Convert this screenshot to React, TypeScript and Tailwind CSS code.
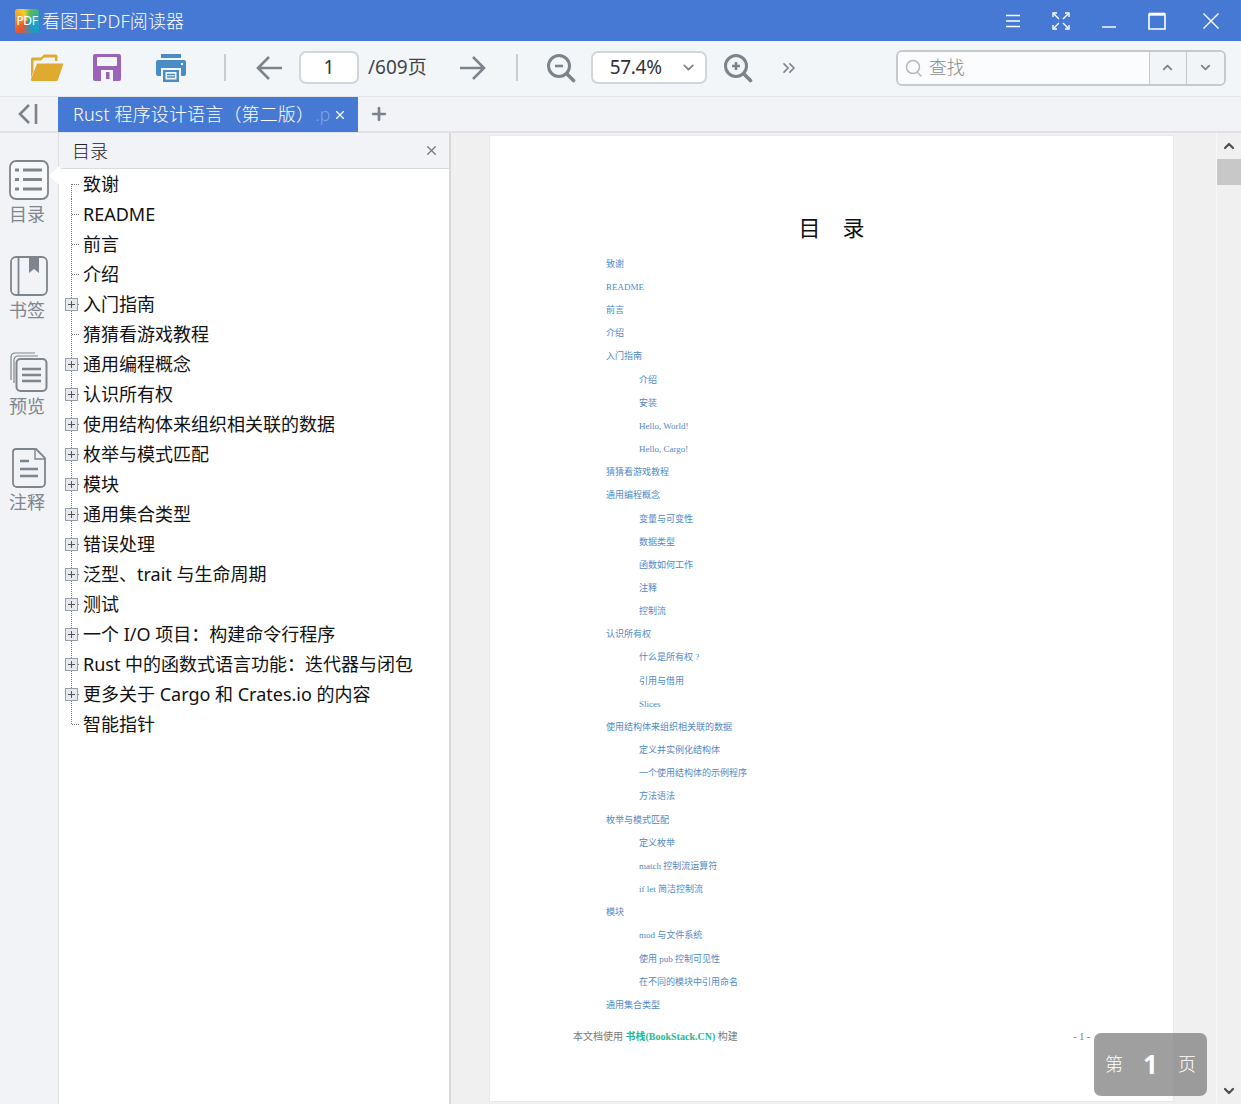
import { ChevronDown, ChevronUp, ChevronsRight, Plus, X } from "lucide-react"

const tocItems = [
  { label: "致谢" },
  { label: "README" },
  { label: "前言" },
  { label: "介绍" },
  { label: "入门指南", hasChildren: true },
  { label: "猜猜看游戏教程" },
  { label: "通用编程概念", hasChildren: true },
  { label: "认识所有权", hasChildren: true },
  { label: "使用结构体来组织相关联的数据", hasChildren: true },
  { label: "枚举与模式匹配", hasChildren: true },
  { label: "模块", hasChildren: true },
  { label: "通用集合类型", hasChildren: true },
  { label: "错误处理", hasChildren: true },
  { label: "泛型、trait 与生命周期", hasChildren: true },
  { label: "测试", hasChildren: true },
  { label: "一个 I/O 项目：构建命令行程序", hasChildren: true },
  { label: "Rust 中的函数式语言功能：迭代器与闭包", hasChildren: true },
  { label: "更多关于 Cargo 和 Crates.io 的内容", hasChildren: true },
  { label: "智能指针" },
]

const pageRows: [string, boolean][] = [
  ["致谢", false],
  ["README", false],
  ["前言", false],
  ["介绍", false],
  ["入门指南", false],
  ["介绍", true],
  ["安装", true],
  ["Hello, World!", true],
  ["Hello, Cargo!", true],
  ["猜猜看游戏教程", false],
  ["通用编程概念", false],
  ["变量与可变性", true],
  ["数据类型", true],
  ["函数如何工作", true],
  ["注释", true],
  ["控制流", true],
  ["认识所有权", false],
  ["什么是所有权 ?", true],
  ["引用与借用", true],
  ["Slices", true],
  ["使用结构体来组织相关联的数据", false],
  ["定义并实例化结构体", true],
  ["一个使用结构体的示例程序", true],
  ["方法语法", true],
  ["枚举与模式匹配", false],
  ["定义枚举", true],
  ["match 控制流运算符", true],
  ["if let 简洁控制流", true],
  ["模块", false],
  ["mod 与文件系统", true],
  ["使用 pub 控制可见性", true],
  ["在不同的模块中引用命名", true],
  ["通用集合类型", false],
]

function TreeGutter({ hasChildren, first, last }: { hasChildren?: boolean; first?: boolean; last?: boolean }) {
  return (
    <svg width="24" height="30" className="shrink-0">
      <line x1="12.5" y1={first ? 15 : 0} x2="12.5" y2={last ? 15 : 30} stroke="#777" strokeDasharray="1 1" />
      <line x1="13" y1="15.5" x2="21" y2="15.5" stroke="#777" strokeDasharray="1 1" />
      {hasChildren && (
        <>
          <rect x="6.5" y="9.5" width="12" height="12" fill="#e6e9f0" stroke="#9aa0a8" />
          <path d="M9 15.5h7M12.5 12v7" stroke="#555" />
        </>
      )}
    </svg>
  )
}

function RailItem({ label, children }: { label: string; children: React.ReactNode }) {
  return (
    <div className="flex flex-col items-center h-[96px]">
      <div className="h-[42px] flex items-center justify-center">{children}</div>
      <span className="mt-[1px] text-[18px] leading-[24px] text-[#7f868e] -ml-[4px]">{label}</span>
    </div>
  )
}

export default function App() {
  return (
    <div className="relative w-[1241px] h-[1104px] overflow-hidden flex flex-col bg-[#f0f0f0] [font-family:'Noto_Sans','Noto_Sans_CJK_SC',sans-serif]">
      {/* Title bar */}
      <div className="h-[41px] shrink-0 bg-[#4679d4] flex items-center text-white">
        <div className="ml-[15px] w-[24px] h-[24px] rounded-[3px] flex items-center justify-center overflow-hidden bg-[conic-gradient(from_20deg,#5cb85c,#18a8c8,#1f9ac0_130deg,#e8552c_200deg,#f08a24_260deg,#f7d02c_320deg,#5cb85c)]">
          <span className="text-[12px] leading-none tracking-[-0.4px] text-white">PDF</span>
        </div>
        <span className="ml-[3px] pt-[1px] text-[18px] font-light tracking-[0.2px]">看图王PDF阅读器</span>
        <div className="ml-auto flex items-center">
          <svg width="16" height="16" viewBox="0 0 16 16" className="mr-[31px]" stroke="#fff" strokeWidth="1.4">
            <path d="M1 2.5h14M1 8h14M1 13.5h14" />
          </svg>
          <svg width="18" height="18" viewBox="0 0 18 18" className="mr-[31px]" fill="none" stroke="#fff" strokeWidth="1.4">
            <path d="M2 2l5 5M16 2l-5 5M2 16l5-5M16 16l-5-5" />
            <path d="M1 5V1h4M13 1h4v4M1 13v4h4M13 17h4v-4" />
          </svg>
          <svg width="16" height="16" viewBox="0 0 16 16" className="mr-[31px]" stroke="#fff" strokeWidth="1.4">
            <path d="M1 14h14" />
          </svg>
          <svg width="18" height="18" viewBox="0 0 18 18" className="mr-[36px]" fill="none" stroke="#fff" strokeWidth="1.6">
            <path d="M1 2h16v15H1z" />
            <path d="M1 2.2h16" strokeWidth="3" />
          </svg>
          <svg width="18" height="18" viewBox="0 0 18 18" className="mr-[21px]" stroke="#fff" strokeWidth="1.4">
            <path d="M1.5 1.5l15 15M16.5 1.5l-15 15" />
          </svg>
        </div>
      </div>

      {/* Toolbar */}
      <div className="h-[56px] shrink-0 bg-[#f2f6f9] border-b border-[#e2e5e8] pb-[2px] flex items-center">
        <svg width="34" height="28" viewBox="0 0 34 28" className="ml-[30px]">
          <path d="M1 24V5.5A2 2 0 0 1 3 3.5h8l3-3h12a1.5 1.5 0 0 1 1.5 1.5v5H25V3.5H14L11 6.5H3.5V17z" fill="#e0a92f" />
          <path d="M7 9.5h26.5L28 25.5a2 2 0 0 1-2 1.5H2.5A1.5 1.5 0 0 1 1 25z" fill="#e0a92f" />
        </svg>
        <svg width="28" height="27" viewBox="0 0 28 27" className="ml-[29px]">
          <path d="M2 0h24a2 2 0 0 1 2 2v23a2 2 0 0 1-2 2H2a2 2 0 0 1-2-2V2a2 2 0 0 1 2-2z" fill="#9a63b8" />
          <rect x="4" y="3" width="20" height="9" rx="1" fill="#f2f6f9" />
          <rect x="8" y="16" width="12" height="11" fill="#f2f6f9" />
          <rect x="13" y="18" width="3.5" height="7" fill="#9a63b8" />
        </svg>
        <svg width="30" height="28" viewBox="0 0 30 28" className="ml-[35px]">
          <rect x="5" y="0" width="20" height="4" fill="#4a8cc5" />
          <path d="M2 6h26a2 2 0 0 1 2 2v12a2 2 0 0 1-2 2h-3v-8H5v8H2a2 2 0 0 1-2-2V8a2 2 0 0 1 2-2z" fill="#4a8cc5" />
          <circle cx="26" cy="10" r="1.2" fill="#f2f6f9" />
          <path d="M7 16h16v12H7z" fill="#4a8cc5" />
          <path d="M9.5 18h11v7.5h-11z" fill="#f2f6f9" />
          <path d="M11 20.5h8M11 23h8" stroke="#4a8cc5" strokeWidth="1.3" />
        </svg>
        <div className="ml-[38px] w-[2px] h-[27px] bg-[#c8ccd0]" />
        <svg width="28" height="26" viewBox="0 0 28 26" className="ml-[29px]" fill="none" stroke="#7b838c" strokeWidth="2.6">
          <path d="M27 13H3M14 2L3 13l11 11" />
        </svg>
        <div className="ml-[16px] w-[60px] h-[33px] bg-white border-2 border-[#d0d6da] rounded-[7px] flex items-center justify-center text-[19px] text-[#333]">
          1
        </div>
        <span className="ml-[9px] text-[19px] text-[#444]">/609页</span>
        <svg width="28" height="26" viewBox="0 0 28 26" className="ml-[32px]" fill="none" stroke="#7b838c" strokeWidth="2.6">
          <path d="M1 13h24M14 2l11 11-11 11" />
        </svg>
        <div className="ml-[29px] w-[2px] h-[27px] bg-[#c8ccd0]" />
        <svg width="30" height="30" viewBox="0 0 30 30" className="ml-[28px]" fill="none" stroke="#7b838c">
          <circle cx="13" cy="13" r="10.5" strokeWidth="3" />
          <path d="M21 21l6.5 6.5" strokeWidth="3.6" strokeLinecap="round" />
          <path d="M9 13h8" strokeWidth="2.6" />
        </svg>
        <div className="ml-[15px] w-[116px] h-[33px] bg-white border-2 border-[#d0d6da] rounded-[7px] flex items-center text-[19px] text-[#333]">
          <span className="ml-[17px] tracking-[-0.3px]">57.4%</span>
          <ChevronDown className="ml-auto mr-[8px] w-[17px] h-[17px] text-[#7b838c]" strokeWidth={2.6} />
        </div>
        <svg width="30" height="30" viewBox="0 0 30 30" className="ml-[16px]" fill="none" stroke="#7b838c">
          <circle cx="13" cy="13" r="10.5" strokeWidth="3" />
          <path d="M21 21l6.5 6.5" strokeWidth="3.6" strokeLinecap="round" />
          <path d="M9 13h8M13 9v8" strokeWidth="2.6" />
        </svg>
        <ChevronsRight className="ml-[26px] w-[20px] h-[20px] text-[#7b838c]" strokeWidth={2} />
        <div className="ml-[97px] w-[330px] h-[36px] border-2 border-[#c6cace] rounded-[6px] flex items-stretch bg-[#fbfcfd]">
          <div className="flex-1 flex items-center border-r border-[#c6cace]">
            <svg width="20" height="20" viewBox="0 0 20 20" className="ml-[6px]" fill="none" stroke="#b4b9be" strokeWidth="1.5">
              <circle cx="9" cy="9" r="6.5" />
              <path d="M13.5 14.5l4 4" />
            </svg>
            <span className="ml-[5px] text-[18px] font-light text-[#8a8a8a]">查找</span>
          </div>
          <div className="w-[37px] flex items-center justify-center border-r border-[#c6cace] bg-[#f2f5f7]">
            <ChevronUp className="w-[15px] h-[15px] text-[#7b838c]" strokeWidth={3} />
          </div>
          <div className="w-[37px] flex items-center justify-center bg-[#f2f5f7] rounded-r-[5px]">
            <ChevronDown className="w-[15px] h-[15px] text-[#7b838c]" strokeWidth={3} />
          </div>
        </div>
      </div>

      {/* Tab bar */}
      <div className="h-[36px] shrink-0 bg-[#f1f3f6] border-b-2 border-[#dfe1e4] flex items-stretch">
        <div className="w-[58px] flex items-center justify-center">
          <svg width="20" height="22" viewBox="0 0 20 22" className="-ml-[2px]" fill="none" stroke="#7b838c" strokeWidth="2.6">
            <path d="M11 2L2 11l9 9M18 1v20" />
          </svg>
        </div>
        <div className="w-[300px] -mb-[1px] bg-[#4679d4] flex items-center text-white pl-[15px]">
          <span className="text-[18px] font-light whitespace-nowrap tracking-[0.15px]">Rust 程序设计语言（第二版）</span>
          <span className="text-[18px] font-light text-[#7ea3e4] ml-[1px]">.p</span>
          <X className="ml-[3px] w-[14px] h-[14px]" strokeWidth={2} />
        </div>
        <div className="ml-[11px] flex items-center">
          <Plus className="w-[20px] h-[20px] text-[#7b838c]" strokeWidth={3.2} />
        </div>
      </div>

      {/* Body */}
      <div className="flex-1 min-h-0 flex">
        {/* Left rail */}
        <div className="relative w-[59px] shrink-0 bg-[#f1f3f6] border-r border-[#dcdee1] pt-[26px] flex flex-col items-center">
          <RailItem label="目录">
            <svg width="40" height="40" viewBox="0 0 40 40" fill="none" stroke="#7e858d">
              <rect x="1" y="1" width="38" height="38" rx="6" strokeWidth="1.8" fill="#f7f8fa" />
              <path d="M6 10h4M6 19.5h4M6 29h4M14 10h19M14 19.5h19M14 29h19" strokeWidth="3" />
            </svg>
          </RailItem>
          <RailItem label="书签">
            <svg width="38" height="40" viewBox="0 0 38 40" fill="none" stroke="#7e858d" strokeWidth="1.8">
              <rect x="1" y="1" width="36" height="38" rx="5" />
              <path d="M8.5 1v38" />
              <path d="M19 1h10v16l-5-4-5 4z" fill="#7e858d" stroke="none" />
            </svg>
          </RailItem>
          <RailItem label="预览">
            <svg width="38" height="40" viewBox="0 0 38 40" fill="none" stroke="#7e858d">
              <path d="M1 28V5a4 4 0 0 1 4-4h20" strokeWidth="1.2" />
              <path d="M4 31V8a4 4 0 0 1 4-4h20" strokeWidth="1.2" />
              <rect x="6.5" y="7" width="30" height="32" rx="4" strokeWidth="2" />
              <path d="M12 17h19M12 23h19M12 29h19" strokeWidth="2.6" />
            </svg>
          </RailItem>
          <RailItem label="注释">
            <svg width="34" height="40" viewBox="0 0 34 40" fill="none" stroke="#7e858d">
              <path d="M4 1h20l9 9v25a4 4 0 0 1-4 4H5a4 4 0 0 1-4-4V4a3 3 0 0 1 3-3z" strokeWidth="1.8" />
              <path d="M23 1v10h10" strokeWidth="1.4" />
              <path d="M8 13h9M8 21h18M8 28h18" strokeWidth="2.6" />
            </svg>
          </RailItem>
          <div className="absolute left-[52px] top-[36px] w-[13px] h-[13px] rotate-45 bg-white" />
        </div>

        {/* Contents panel */}
        <div className="w-[390px] shrink-0 bg-white flex flex-col">
          <div className="h-[36px] shrink-0 bg-[#f1f3f6] border-b border-[#d8dadd] flex items-center">
            <span className="ml-[13px] pt-[2px] text-[18px] font-light text-[#222]">目录</span>
            <X className="ml-auto mr-[10px] w-[15px] h-[15px] text-[#777]" strokeWidth={2} />
          </div>
          <div className="flex flex-col">
            {tocItems.map((item, i) => (
              <div key={i} className="flex items-center h-[30px]">
                <TreeGutter hasChildren={item.hasChildren} first={i === 0} last={i === tocItems.length - 1} />
                <span className="pt-[1px] text-[18px] text-[#111] whitespace-nowrap">{item.label}</span>
              </div>
            ))}
          </div>
        </div>

        {/* Viewer */}
        <div className="flex-1 min-w-0 bg-[#f0f0f0] border-l-2 border-[#d8d8d8] flex">
          <div className="flex-1 min-w-0 pl-[38px] pt-[2px]">
            <div className="w-[685px] h-[967px] bg-white border border-[#e9e9e9] flex flex-col">
              <div className="mt-[76px] flex justify-center gap-[22px] text-[22px] leading-[30px] text-[#111]">
                <span>目</span>
                <span>录</span>
              </div>
              <div className="mt-[11px] pl-[116px] flex flex-col [font-family:'Liberation_Serif','Noto_Sans_CJK_SC',serif]">
                {pageRows.map(([text, indented], i) => (
                  <div key={i} className={`h-[23.16px] flex items-center text-[9px] text-[#5089c6] whitespace-pre ${indented ? "ml-[33px]" : ""}`}>
                    {text}
                  </div>
                ))}
              </div>
              <div className="mt-[12px] pl-[83px] pr-[83px] flex items-center justify-between text-[10px] text-[#777] [font-family:'Liberation_Serif','Noto_Sans_CJK_SC',serif]">
                <span>
                  本文档使用 <span className="font-bold text-[#1abc9c]">书栈(BookStack.CN)</span> 构建
                </span>
                <span className="ml-auto">- 1 -</span>
              </div>
            </div>
          </div>

          {/* Scrollbar */}
          <div className="w-[25px] shrink-0 bg-[#f0f0f0] border-l border-[#f8f8f8] flex flex-col">
            <div className="h-[26px] flex items-center justify-center">
              <ChevronUp className="w-[16px] h-[16px] text-[#505050]" strokeWidth={3.4} />
            </div>
            <div className="h-[26px] bg-[#c8c8c8]" />
            <div className="flex-1" />
            <div className="h-[26px] flex items-center justify-center">
              <ChevronDown className="w-[16px] h-[16px] text-[#505050]" strokeWidth={3.4} />
            </div>
          </div>
        </div>
      </div>

      {/* Page number badge */}
      <div className="absolute left-[1094px] top-[1033px] w-[113px] h-[63px] rounded-[7px] bg-[#7f7f7f]/75 flex items-center text-white">
        <span className="ml-[11px] text-[18px] font-light">第</span>
        <span className="ml-[20px] text-[26px] font-bold">1</span>
        <span className="ml-auto mr-[11px] text-[18px] font-light">页</span>
      </div>
    </div>
  )
}
